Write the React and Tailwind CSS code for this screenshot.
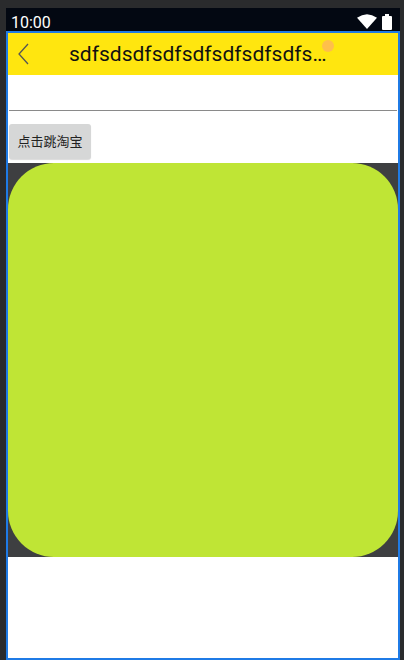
import React from "react";

export default function App() {
  return (
    <div className="w-[404px] h-[660px] overflow-hidden bg-[#2a2b2d] pl-[6px] pr-[4px] pt-[8px] flex flex-col" style={{ fontFamily: "Roboto, 'Noto Sans CJK SC', sans-serif" }}>
      <div className="h-[23px] bg-[#030812] flex items-center justify-between pl-[5px] pr-[8px] shrink-0">
        <span className="text-white text-[16px] leading-none mt-[7px]">10:00</span>
        <div className="flex items-center gap-[5px] mt-[4px]">
          <svg width="20" height="15" viewBox="0 0 20 15"><path d="M0 3.8 Q10 -3.2 20 3.8 L10 15 Z" fill="white" /></svg>
          <svg width="10" height="16" viewBox="0 0 10 16"><rect x="3" y="0" width="4" height="2" fill="white" /><rect x="0" y="2" width="10" height="14" rx="1" fill="white" /></svg>
        </div>
      </div>
      <div className="flex-1 border-2 border-[#1f7be6] bg-white flex flex-col">
        <div className="h-[42px] bg-[#ffe60f] flex items-center relative shrink-0">
          <svg className="ml-[9px]" width="14" height="22" viewBox="0 0 14 22"><path d="M11 1 L2 11 L11 21" fill="none" stroke="#555" strokeWidth="1.3" /></svg>
          <span className="ml-[38px] text-[21px] text-[#111] leading-none">sdfsdsdfsdfsdfsdfsdfsdfs…</span>
          <div className="absolute left-[314px] top-[7px] w-[12px] h-[12px] rounded-full bg-[#ffbf4a]" />
        </div>
        <div className="h-[36px] mx-[1px] border-b border-[#8a8a8a] shrink-0" />
        <div className="pt-[13px] pl-[1px] shrink-0">
          <button className="h-[35px] w-[82px] bg-[#d6d7d7] rounded-[3px] text-[13px] text-[#222] shadow-[0_1px_1px_rgba(0,0,0,0.15)]">点击跳淘宝</button>
        </div>
        <div className="mt-[4px] h-[394px] bg-[#3e3f41] shrink-0">
          <div className="w-full h-full bg-[#bfe535] rounded-[46px]" />
        </div>
        <div className="flex-1 bg-white" />
      </div>
    </div>
  );
}
